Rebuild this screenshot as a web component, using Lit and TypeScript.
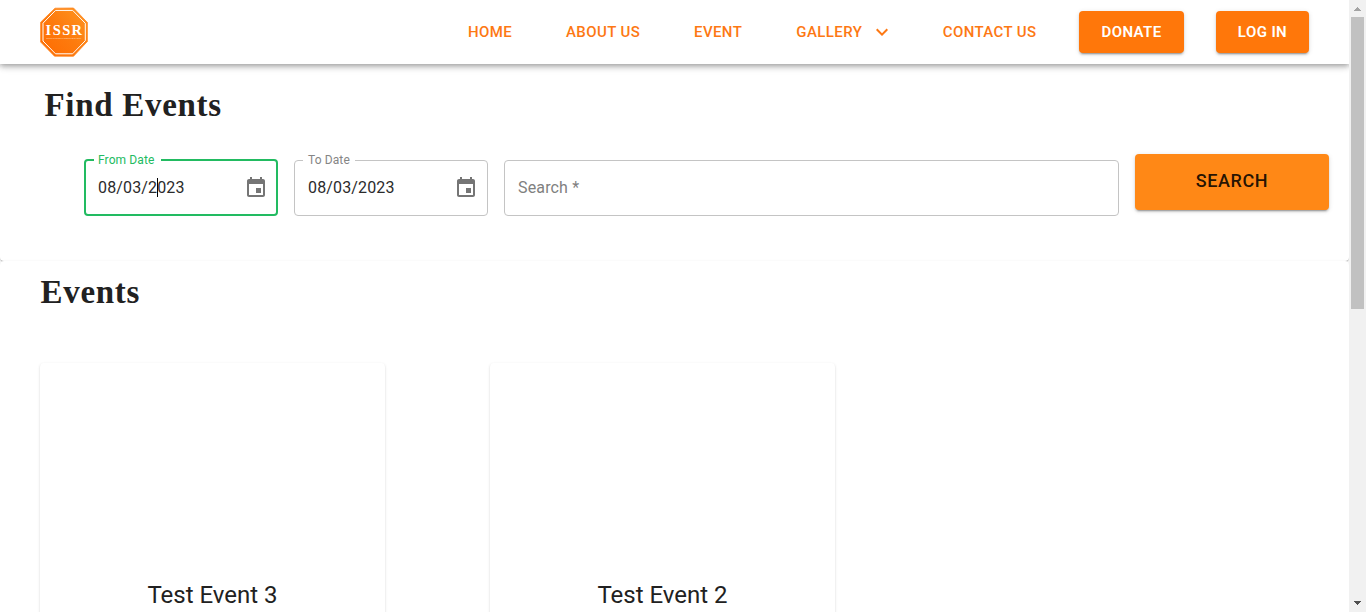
import { LitElement, html, css } from "lit";
import { customElement, property } from "lit/decorators.js";

@customElement("issr-logo")
class IssrLogo extends LitElement {
  static styles = css`
    :host { display: block; width: 50px; height: 50px; }
    svg { display: block; }
    .word { font: bold 14.5px "Liberation Serif", serif; fill: #fff; }
    .sub { font: 2.2px "Liberation Serif", serif; fill: #fff; opacity: .8; }
  `;
  render() {
    return html`<svg width="50" height="50" viewBox="0 0 50 50">
      <defs>
        <linearGradient id="g" x1="0" y1="1" x2="1" y2="0">
          <stop offset="0" stop-color="#ff6a00" /><stop offset="0.5" stop-color="#fd7b0e" /><stop offset="1" stop-color="#ff9722" />
        </linearGradient>
      </defs>
      <path d="M16 1.2 34.5 1 48.4 15.5 48.4 34.5 34.5 49.3 15.5 49.2 1.6 35 1.6 15.2Z" fill="url(#g)" stroke="#ff8a26" stroke-width=".8" stroke-linejoin="round" />
      <path d="M16.5 3.4 33.7 3.4 46.3 16.3 46.3 33.7 33.6 46.8 16.5 46.8 4 34 4 16.2Z" fill="none" stroke="#fff" stroke-width="1" />
      <text class="word" x="6.6" y="28.2" textLength="36.5">ISSR</text>
      <text class="sub" x="7" y="31.5" textLength="35">INSTITUTE OF SOCIAL SERVICE RESEARCH</text>
    </svg>`;
  }
}

@customElement("date-field")
class DateField extends LitElement {
  @property() label = "";
  @property() value = "";
  @property({ type: Boolean }) active = false;
  static styles = css`
    :host { display: block; width: 194px; height: 56px; font-family: Roboto, sans-serif; }
    .field { position: relative; display: flex; align-items: center; height: 56px; box-sizing: border-box; padding: 0 10px 0 14px; }
    fieldset { position: absolute; inset: -5px 0 0; margin: 0; padding: 0 8px; border: 1px solid #c4c4c4; border-radius: 4px; min-width: 0; }
    .on fieldset { top: -6px; border: 2px solid #22bb61; padding: 0 8px; }
    legend { height: 11px; padding: 0; font-size: 12px; visibility: hidden; }
    legend span { padding: 0 5px; letter-spacing: 0.15px; }
    .label { position: absolute; left: 14px; top: -7px; font-size: 12px; line-height: 14px; letter-spacing: 0.113px; color: #858585; white-space: nowrap; }
    .on .label { color: #22bb61; }
    .value { flex: 1; margin-top: -2px; font-size: 16px; line-height: 23px; letter-spacing: 0.15px; color: #2b2b2b; }
    .caret { display: inline-block; width: 1px; height: 19px; margin-right: -1px; vertical-align: -4px; background: #000; }
    svg { display: block; fill: #757575; }
  `;
  render() {
    return html`<div class="field ${this.active ? "on" : ""}">
      <fieldset><legend><span>${this.label}</span></legend></fieldset>
      <span class="label">${this.label}</span>
      <span class="value">${this.active
        ? html`${this.value.slice(0, 7)}<span class="caret"></span>${this.value.slice(7)}`
        : this.value}</span>
      <svg width="24" height="24" viewBox="0 0 24 24"><path d="M17 12h-5v5h5v-5zM16 1v2H8V1H6v2H5c-1.11 0-1.99.9-1.99 2L3 19c0 1.1.89 2 2 2h14c1.1 0 2-.9 2-2V5c0-1.1-.9-2-2-2h-1V1h-2zm3 18H5V8h14v11z" /></svg>
    </div>`;
  }
}

@customElement("app-root")
class AppRoot extends LitElement {
  static styles = css`
    :host { display: flex; height: 612px; overflow: hidden; background: #fff; font-family: Roboto, sans-serif; color: #212121; }
    .page { width: 1349px; flex: none; overflow: hidden; display: flex; flex-direction: column; }
    header { position: relative; z-index: 2; display: flex; align-items: center; height: 64px; flex: none; box-sizing: border-box; padding: 0 40px 0 39px; background: #fff;
      box-shadow: 0 2px 4px -1px rgba(0,0,0,.2), 0 4px 5px 0 rgba(0,0,0,.14), 0 1px 10px 0 rgba(0,0,0,.12); }
    nav { display: flex; align-items: center; margin-left: auto; color: #fd7813; font-size: 15px; font-weight: 500; line-height: 26px; letter-spacing: 0.4px; white-space: nowrap; }
    .link { display: flex; align-items: center; }
    .w1 { width: 98px; } .w2 { width: 128px; } .w3 { width: 102.3px; } .w4 { width: 146.4px; } .w5 { width: 136.3px; }
    .link svg { margin-left: 8px; fill: #fd7813; }
    .btn { display: flex; align-items: center; justify-content: center; height: 42px; border-radius: 4px; background: #ff770a; color: #fff;
      box-shadow: 0 3px 1px -2px rgba(0,0,0,.2), 0 2px 2px 0 rgba(0,0,0,.14), 0 1px 5px 0 rgba(0,0,0,.12); }
    .donate { width: 105px; margin-right: 32px; font-weight: 600; }
    .login { width: 93px; font-weight: 600; }
    .find, .events { flex: none; border-radius: 4px; background: #fff;
      box-shadow: 0 2px 1px -1px rgba(0,0,0,.2), 0 1px 1px 0 rgba(0,0,0,.14), 0 1px 3px 0 rgba(0,0,0,.12); }
    .find { height: 197px; }
    h1, h2 { margin: 0; font: bold 33px/42px "Liberation Serif", serif; letter-spacing: 0.7px; }
    h1 { padding: 20px 0 0 44.5px; }
    h2 { padding: 10px 0 0 40.5px; }
    .form { display: flex; gap: 16px; padding: 34px 20px 0 84px; }
    .search { flex: 1; height: 56px; box-sizing: border-box; border: 1px solid #c4c4c4; border-radius: 4px; padding: 0 13px; font-size: 16px; line-height: 54px; letter-spacing: 0.15px; color: #808080; }
    .go { width: 194px; height: 56px; margin-top: -6px; background: #ff8816; color: rgba(0,0,0,.87); font-size: 18px; font-weight: 500; letter-spacing: 0.6px; line-height: 54px; align-items: flex-start; }
    .events { position: relative; height: 400px; }
    .cards { display: flex; gap: 105px; padding: 50px 0 0 40px; }
    .card { width: 345px; height: 330px; box-sizing: border-box; padding-top: 216px; border-radius: 4px; background: #fff; text-align: center; font-size: 24px; line-height: 32px;
      box-shadow: 0 2px 1px -1px rgba(0,0,0,.2), 0 1px 1px 0 rgba(0,0,0,.14), 0 1px 3px 0 rgba(0,0,0,.12); }
    .bar { display: flex; flex-direction: column; align-items: center; width: 17px; flex: none; background: #f1f1f1; }
    .thumb { width: 13px; height: 292px; background: #c1c1c1; }
    .bar svg { display: block; }
    .down { margin-top: auto; }
  `;
  render() {
    return html`
      <div class="page">
        <header>
          <issr-logo></issr-logo>
          <nav>
            <span class="link w1">HOME</span>
            <span class="link w2">ABOUT US</span>
            <span class="link w3">EVENT</span>
            <span class="link w4">GALLERY<svg width="24" height="24" viewBox="0 0 24 24"><path d="M7.41 8.59 12 13.17l4.59-4.58L18 10l-6 6-6-6 1.41-1.41z" /></svg></span>
            <span class="link w5">CONTACT US</span>
            <span class="btn donate">DONATE</span>
            <span class="btn login">LOG IN</span>
          </nav>
        </header>
        <section class="find">
          <h1>Find Events</h1>
          <div class="form">
            <date-field label="From Date" value="08/03/2023" active></date-field>
            <date-field label="To Date" value="08/03/2023"></date-field>
            <div class="search">Search *</div>
            <div class="btn go">SEARCH</div>
          </div>
        </section>
        <section class="events">
          <h2>Events</h2>
          <div class="cards">
            ${["Test Event 3", "Test Event 2"].map((t) => html`<div class="card">${t}</div>`)}
          </div>
        </section>
      </div>
      <div class="bar">
        <svg width="17" height="17" viewBox="0 0 17 17" shape-rendering="crispEdges"><path d="M8 7h1v1h1v1h1v1h1v1H5v-1h1V9h1V8h1z" fill="#a3a3a3" /></svg>
        <div class="thumb"></div>
        <svg class="down" width="17" height="17" viewBox="0 0 17 17" shape-rendering="crispEdges"><path d="M5 6h7v1h-1v1h-1v1H9v1H8V9H7V8H6V7H5z" fill="#505050" /></svg>
      </div>`;
  }
}
